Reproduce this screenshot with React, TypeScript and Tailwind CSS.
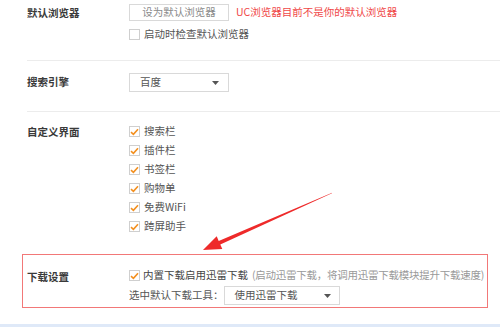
import React from "react";

const Check = ({ checked }: { checked?: boolean }) => (
  <span className="w-[11px] h-[11px] border border-[#cfcfcf] bg-white flex items-center justify-center shrink-0">
    {checked && (
      <svg width="9" height="8" viewBox="0 0 9 8">
        <path d="M1 4.2 L3.4 6.4 L8 1.2" fill="none" stroke="#f39020" strokeWidth="1.6" />
      </svg>
    )}
  </span>
);

const Caret = () => (
  <svg width="7" height="4" viewBox="0 0 7 4">
    <path d="M0 0 L7 0 L3.5 4 Z" fill="#555" />
  </svg>
);

export default function App() {
  const items = ["搜索栏", "插件栏", "书签栏", "购物单", "免费WiFi", "跨屏助手"];
  return (
    <div
      className="w-[500px] h-[327px] bg-white relative overflow-hidden text-[10.5px] leading-none text-[#555] whitespace-nowrap"
      style={{ fontFamily: '"Noto Sans CJK SC", "Noto Sans", sans-serif' }}
    >
      {/* section 1 */}
      <div className="ml-[27px] h-[61px] border-b border-[#ececec] flex">
        <div className="w-[102px] shrink-0 pt-[8px] font-bold text-[#3a3a3a]">默认浏览器</div>
        <div className="flex flex-col pt-[4px]">
          <div className="flex items-center">
            <div className="w-[100px] h-[17px] border border-[#d9d9d9] flex items-center justify-center text-[#8a8a8a]">
              设为默认浏览器
            </div>
            <span className="ml-[7px] text-[#f04848]">UC浏览器目前不是你的默认浏览器</span>
          </div>
          <div className="flex items-center gap-[4px] mt-[8px] text-[#555]">
            <Check />
            <span>启动时检查默认浏览器</span>
          </div>
        </div>
      </div>
      {/* section 2 */}
      <div className="ml-[27px] h-[51px] border-b border-[#ececec] flex">
        <div className="w-[102px] shrink-0 pt-[16px] font-bold text-[#3a3a3a]">搜索引擎</div>
        <div className="pt-[12px]">
          <div className="w-[100px] h-[19px] border border-[#d9d9d9] flex items-center justify-between pl-[10px] pr-[9px] text-[#555]">
            <span>百度</span>
            <Caret />
          </div>
        </div>
      </div>
      {/* section 3 */}
      <div className="ml-[27px] flex pt-[10px]">
        <div className="w-[102px] shrink-0 pt-[5px] font-bold text-[#3a3a3a]">自定义界面</div>
        <div className="flex flex-col">
          {items.map((t) => (
            <div key={t} className="h-[19px] flex items-center gap-[4px]">
              <Check checked />
              <span>{t}</span>
            </div>
          ))}
        </div>
      </div>
      {/* section 4 */}
      <div className="ml-[22px] mt-[18px] w-[466px] h-[54px] border border-[#f27878] flex">
        <div className="w-[106px] shrink-0 pl-[4px] pt-[17px] font-bold text-[#3a3a3a]">下载设置</div>
        <div className="flex flex-col pt-[15px]">
          <div className="flex items-center gap-[3px]">
            <Check checked />
            <span className="text-[#444]">内置下载启用迅雷下载</span>
            <span className="ml-[1px] text-[#999] tracking-[-0.25px]">(启动迅雷下载，将调用迅雷下载模块提升下载速度)</span>
          </div>
          <div className="flex items-center mt-[5px]">
            <span className="text-[#555]">选中默认下载工具：</span>
            <div className="w-[116px] h-[19px] border border-[#d9d9d9] flex items-center justify-between pl-[10px] pr-[8px]">
              <span>使用迅雷下载</span>
              <Caret />
            </div>
          </div>
        </div>
      </div>
      <div className="absolute left-0 right-0 bottom-0 h-[3px] bg-[#dfe9f8]" />
      {/* arrow */}
      <svg className="absolute left-0 top-0 pointer-events-none" width="500" height="327">
        <polygon
          points="332.1,192.7 331.9,193.3 220.3,244.5 222.3,249.1 203,250 216.7,236.3 218.7,240.9"
          fill="#ee2a2a"
        />
      </svg>
    </div>
  );
}
